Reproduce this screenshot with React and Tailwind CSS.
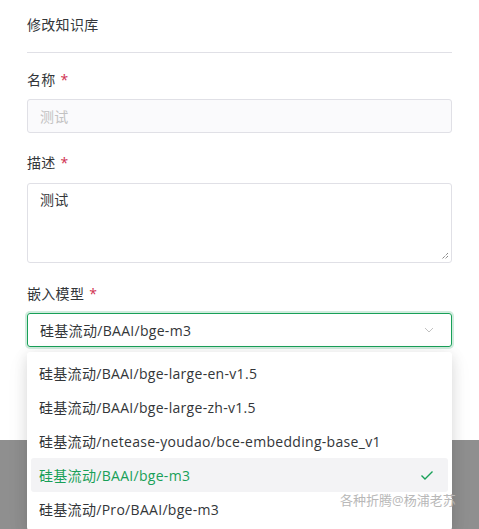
import React from 'react';

const font = {
  fontFamily: '"Open Sans", "Noto Sans CJK SC", sans-serif',
};

const options = [
  '硅基流动/BAAI/bge-large-en-v1.5',
  '硅基流动/BAAI/bge-large-zh-v1.5',
  '硅基流动/netease-youdao/bce-embedding-base_v1',
  '硅基流动/BAAI/bge-m3',
  '硅基流动/Pro/BAAI/bge-m3',
];

const selected = '硅基流动/BAAI/bge-m3';

const Label = ({ children }) => (
  <div className="flex h-5 items-center text-[14px] leading-5 text-[#333639]">
    {children}
    <span className="ml-[5px] text-[#d03050]">*</span>
  </div>
);

const App = () => {
  return (
    <div
      className="relative h-[529px] w-[479px] overflow-hidden bg-[#8f8f8f] tracking-[0.3px]"
      style={font}
    >
      <div className="h-[440px] bg-white px-[27px]">
        <div className="flex h-[53px] items-center border-b border-[#e0e0e6] pb-[3px] text-[14px] text-[#333639]">
          修改知识库
        </div>

        <div className="mt-[17px]">
          <Label>名称</Label>
          <div className="mt-[9px] flex h-[34px] items-center rounded-[3px] border border-[#e0e0e6] bg-[#fafafc] px-[12px] text-[14px] text-[#c2c2c2]">
            测试
          </div>
        </div>

        <div className="mt-[20px]">
          <Label>描述</Label>
          <div className="relative mt-[10px] h-[80px] rounded-[3px] border border-[#e0e0e6] bg-white px-[12px] pt-[6px] text-[14px] leading-5 text-[#333639]">
            测试
            <svg className="absolute bottom-[2px] right-[2px]" width="8" height="8" viewBox="0 0 8 8">
              <path d="M7 1 L1 7 M7 4 L4 7" stroke="#555" strokeWidth="1" strokeDasharray="1 1" fill="none" />
            </svg>
          </div>
        </div>

        <div className="mt-[21px]">
          <Label>嵌入模型</Label>
          <div className="relative mt-[9px]">
            <div className="flex h-[34px] items-center justify-between rounded-[3px] border border-[#18a058] px-[12px] text-[14px] text-[#333639] shadow-[0_0_0_2px_rgba(24,160,88,0.2)]">
              <span>{selected}</span>
              <svg width="12" height="12" viewBox="0 0 12 12" className="mr-[4px]">
                <path d="M2 4 L6 8 L10 4" stroke="#c2c2c2" strokeWidth="1" fill="none" />
              </svg>
            </div>

            <div className="absolute left-0 right-0 top-full z-10 mt-[5px] rounded-[3px] bg-white p-[4px] shadow-[0_3px_14px_rgba(0,0,0,0.12),0_6px_24px_rgba(0,0,0,0.06)]">
              {options.map((opt) => {
                const active = opt === selected;
                return (
                  <div
                    key={opt}
                    className={`flex h-[34px] items-center justify-between rounded-[3px] px-[8px] text-[14px] ${
                      active ? 'bg-[#f3f3f5] text-[#18a058]' : 'text-[#333639]'
                    }`}
                  >
                    <span>{opt}</span>
                    {active && (
                      <svg width="14" height="14" viewBox="0 0 14 14" className="mr-[6px]">
                        <path d="M1.5 7.5 L5 11 L12.5 3.5" stroke="#18a058" strokeWidth="1.4" fill="none" />
                      </svg>
                    )}
                  </div>
                );
              })}
            </div>
          </div>
        </div>
      </div>

      <div className="absolute left-[340px] top-[491px] z-20 whitespace-nowrap text-[13px] leading-[18px] tracking-normal text-[#b8b8b8]">
        各种折腾@杨浦老苏
      </div>
    </div>
  );
};

export default App;
